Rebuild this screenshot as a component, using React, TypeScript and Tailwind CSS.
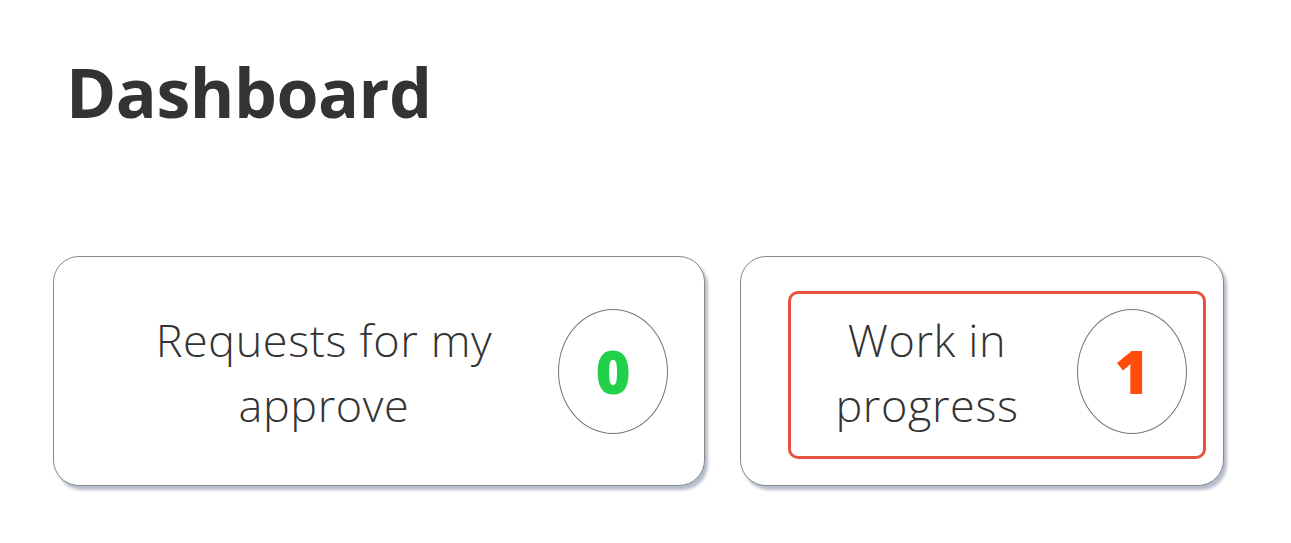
import React from "react";

function Card({ label, value, color, highlight, width }: { label: React.ReactNode; value: string; color: string; highlight?: boolean; width: string }) {
  return (
    <div className={`relative flex h-[230px] ${width} items-center rounded-[26px] border-[1.5px] border-[#8a8a8a] bg-white px-[36px] shadow-[3px_4px_3px_rgba(120,135,160,0.55)]`}>
      <div className="flex-1 pt-[2px] text-center text-[45px] font-light leading-[65px] tracking-[0.6px] text-[#333]" style={{ fontFamily: '"Open Sans", sans-serif' }}>
        {label}
      </div>
      <div className="flex h-[125px] w-[110px] shrink-0 items-center justify-center rounded-[50%] border-[1.5px] border-[#777]">
        <span className={`text-[60px] font-extrabold leading-none ${color}`} style={{ fontFamily: '"Open Sans", sans-serif' }}>
          {value}
        </span>
      </div>
      {highlight && (
        <div className="pointer-events-none absolute left-[47px] top-[34px] h-[168px] w-[418px] rounded-[10px] border-[3px] border-[#e4533f]" />
      )}
    </div>
  );
}

export default function App() {
  return (
    <div className="h-[543px] w-[1291px] bg-white" style={{ fontFamily: '"Open Sans", sans-serif' }}>
      <div className="px-[53px] pt-[52px]">
        <h1 className="pl-[13px] text-[68px] font-bold leading-[80px] tracking-[-0.5px] text-[#333]">Dashboard</h1>
        <div className="mt-[124px] flex gap-[35px]">
          <Card width="w-[652px]" label={<>Requests for my<br />approve</>} value="0" color="text-[#22d14a]" />
          <Card width="w-[484px]" label={<>Work in<br />progress</>} value="1" color="text-[#ff4b0c]" highlight />
        </div>
      </div>
    </div>
  );
}
